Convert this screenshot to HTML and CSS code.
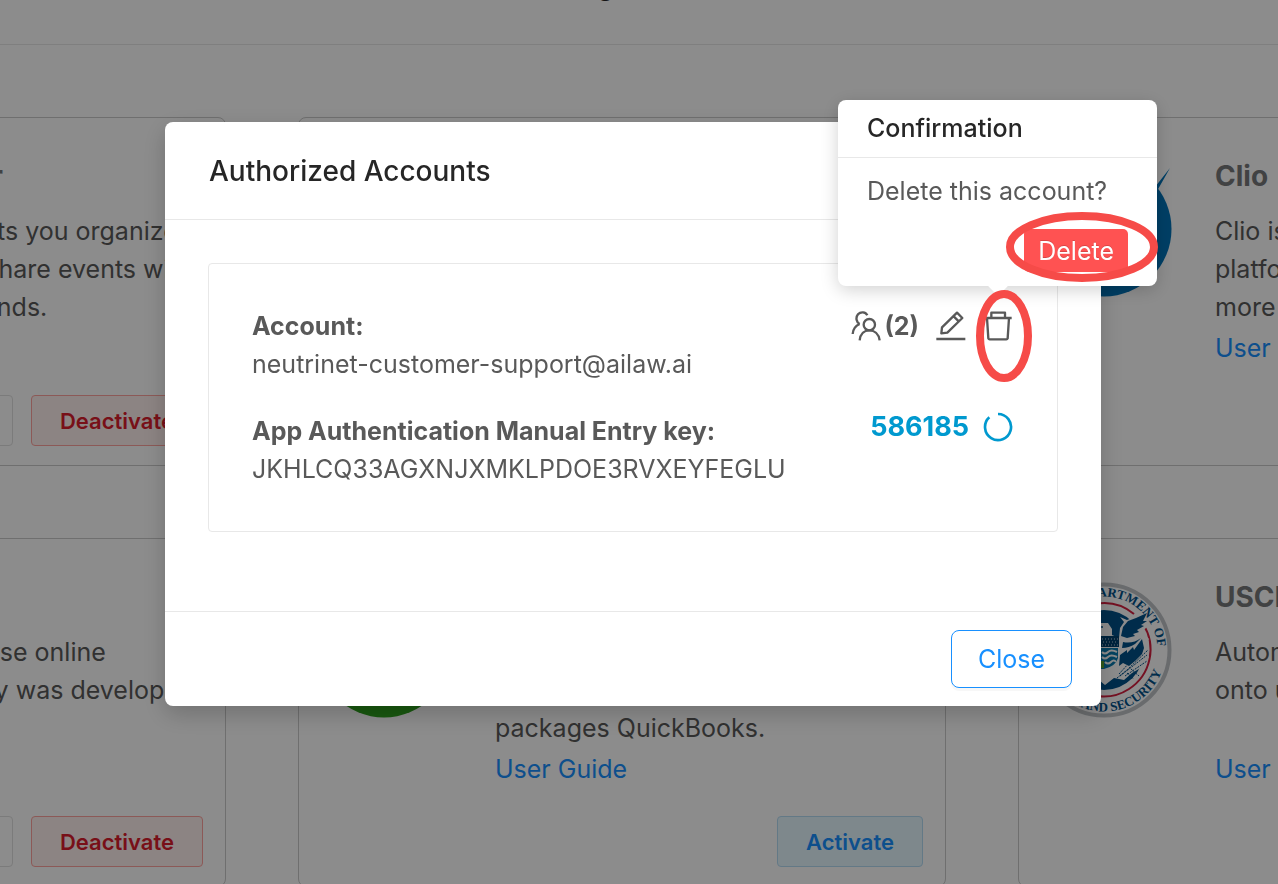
FILE: index.html
```html
<!DOCTYPE html>
<html lang="en">
<head>
<meta charset="utf-8">
<meta name="viewport" content="width=device-width, initial-scale=1">
<title>Authorized Accounts</title>
<link rel="stylesheet" href="styles.css">
</head>
<body>
<div class="page">
  <header class="page-header"><h1 class="page-title">Integrations</h1></header>
  <main class="cards">
    <article class="card">
      <div class="card-main">
        <div class="logo"></div>
        <div class="card-text">
          <h2 class="card-title">Google Calendar</h2>
          <p class="card-desc">Google calendar lets you organize<br>the schedule and share events with<br>coworkers and friends.</p>
          <a class="link" href="#">User Guide</a>
        </div>
      </div>
      <div class="card-actions">
        <button class="btn btn-plain" type="button">Settings</button>
        <button class="btn btn-deactivate" type="button">Deactivate</button>
      </div>
    </article>
    <article class="card">
      <div class="card-main">
        <div class="logo"></div>
        <div class="card-text">
          <h2 class="card-title">Outlook</h2>
          <p class="card-desc">Email and calendar.</p>
          <a class="link" href="#">User Guide</a>
        </div>
      </div>
      <div class="card-actions">
        <button class="btn btn-activate" type="button">Activate</button>
      </div>
    </article>
    <article class="card">
      <div class="card-main">
        <svg class="logo" viewBox="0 0 136 136" aria-hidden="true">
          <circle cx="68" cy="68" r="67.500" fill="#0073b8"/>
          <path d="M108 40L134 7L121 30L112 48Z" fill="#0073b8"/>
        </svg>
        <div class="card-text">
          <h2 class="card-title">Clio</h2>
          <p class="card-desc">Clio is a legal software<br>platform for law firms and<br>more</p>
          <a class="link" href="#">User Guide</a>
        </div>
      </div>
      <div class="card-actions">
        <button class="btn btn-activate" type="button">Activate</button>
      </div>
    </article>
    <article class="card">
      <div class="card-main">
        <div class="logo"></div>
        <div class="card-text">
          <h2 class="card-title">LawPay</h2>
          <p class="card-desc">LawPay is free to use online<br>solutions. Company was developed<br></p>
          <a class="link" href="#">User Guide</a>
        </div>
      </div>
      <div class="card-actions">
        <button class="btn btn-plain" type="button">Settings</button>
        <button class="btn btn-deactivate" type="button">Deactivate</button>
      </div>
    </article>
    <article class="card">
      <div class="card-main">
        <svg class="logo" viewBox="0 0 136 136" aria-hidden="true"><circle cx="68" cy="68" r="67.500" fill="#2ca01c"/></svg>
        <div class="card-text">
          <h2 class="card-title">QuickBooks</h2>
          <p class="card-desc">Intuit develops the<br>accounting software<br>packages QuickBooks.</p>
          <a class="link" href="#">User Guide</a>
        </div>
      </div>
      <div class="card-actions">
        <button class="btn btn-activate" type="button">Activate</button>
      </div>
    </article>
    <article class="card">
      <div class="card-main">
        <svg class="logo" viewBox="0 0 136 136" aria-hidden="true">
          <defs>
            <path id="seal-top" d="M14.500 68A53.500 53.500 0 0 1 68 14.500A53.500 53.500 0 0 1 121.500 68V80"/>
            <path id="seal-bottom" d="M6.500 68A61.500 61.500 0 0 0 129.500 68"/>
          </defs>
          <circle cx="68" cy="68" r="65.500" fill="#fff" stroke="#c0c4c7" stroke-width="4"/>
          <path d="M28 43A47 47 0 0 1 98 32M107 42A47 47 0 0 1 28 93" fill="none" stroke="#d51f3f" stroke-width="2"/>
          <circle cx="68" cy="68" r="40" fill="#005189"/>
          <path d="M83 56L84 46L88 40L84 35L91 38L99 35L112 31L108 41L114 43L106 49L113 57L109 64L113 75L108 84L96 91L88 98L78 96L69 103L58 94L58 43L63 41L72 41L76 47L76 53Z" fill="#fff"/>
          <path d="M85 54L87 45L92 39L100 36L111 31L107 39L111 39L105 43L108 44L101 48L103 50L97 52L99 54L91 56Z" fill="#005189"/>
          <path d="M84 73L91 68L91 71L97 65L98 68L106 57L108 66L106 72L99 79L93 84L87 81L83 84Z" fill="#005189"/>
          <path d="M87 60Q97 62 105 56L99 62Q93 66 86 66Z" fill="#005189"/>
          <path d="M58 54H83V65H58Z" fill="#00416f"/>
          <path d="M60 57H82M61 60H82M60 63H82" stroke="#b9cbd8" stroke-width="1" stroke-dasharray="1 2"/>
          <path d="M58 66H82V76Q80 84 68 87H58Z" fill="#087baf"/>
          <path d="M66 70q3 3 6 0t9 0M66 75q3 3 6 0t9 0M69 80q3 3 6 0t5 0" stroke="#fff" stroke-width="2" fill="none"/>
          <path d="M58 79H68V86H58Z" fill="#59a331"/>
          <circle cx="66" cy="45" r="1" fill="#005189"/>
          <path d="M81 96L91 88L112 68M84 94L111 73M83 92L104 69M89 94L111 79M91 91L98 97M95 87L103 94" stroke="#005189" stroke-width="1" stroke-dasharray="2 1" fill="none"/>
          <text class="seal-text"><textPath href="#seal-top" startOffset="53%" text-anchor="middle">U.S. DEPARTMENT OF</textPath></text>
          <text class="seal-text"><textPath href="#seal-bottom" startOffset="50%" text-anchor="middle">HOMELAND SECURITY</textPath></text>
        </svg>
        <div class="card-text">
          <h2 class="card-title">USCIS</h2>
          <p class="card-desc">Automatically file forms<br>onto uscis.gov</p>
          <a class="link" href="#">User Guide</a>
        </div>
      </div>
      <div class="card-actions">
        <button class="btn btn-activate" type="button">Activate</button>
      </div>
    </article>
  </main>
</div>

<div class="mask">
  <section class="modal" role="dialog" aria-labelledby="modal-title">
    <header class="modal-header"><h2 class="modal-title" id="modal-title">Authorized Accounts</h2></header>
    <div class="modal-body">
      <div class="account">
        <div class="row">
          <div class="field"><strong>Account:</strong><span>neutrinet-customer-support@ailaw.ai</span></div>
          <div class="tools">
            <button class="tool" type="button" aria-label="Users">
              <svg class="icon" viewBox="0 0 90 90" aria-hidden="true">
                <circle cx="55" cy="41" r="17"/>
                <path d="M26 88C28 68 40 58 55 58S83 68 86 88M49 13C44 2 29 1 21 10C13 20 16 33 26 39M26 39C14 44 6 55 5 69"/>
              </svg>
              <b>(2)</b>
            </button>
            <button class="tool" type="button" aria-label="Edit">
              <svg class="icon" viewBox="0 0 90 90" aria-hidden="true"><path d="M1 84H88M16 67L18 49L63 5L79 21L34 65ZM53 16L69 32"/></svg>
            </button>
            <div class="popover-anchor">
              <button class="tool" type="button" aria-label="Delete account">
                <svg class="icon" viewBox="0 0 90 90" aria-hidden="true"><path d="M3 21H86M25 20V5H66V20M12 21L16 82Q17 85 20 85H70Q73 85 74 82L78 21"/></svg>
              </button>
              <svg class="marker marker-tall" viewBox="0 0 56 92" aria-hidden="true"><ellipse cx="28" cy="46" rx="24" ry="42"/></svg>
              <div class="popover" role="dialog" aria-labelledby="popover-title">
                <h3 class="popover-title" id="popover-title">Confirmation</h3>
                <div class="popover-body">
                  <p class="popover-text">Delete this account?</p>
                  <button class="btn-delete" type="button">Delete</button>
                </div>
                <svg class="marker marker-wide" viewBox="0 0 152 70" aria-hidden="true"><ellipse cx="76" cy="35" rx="72" ry="31"/></svg>
              </div>
            </div>
          </div>
        </div>
        <div class="row">
          <div class="field"><strong>App Authentication Manual Entry key:</strong><span>JKHLCQ33AGXNJXMKLPDOE3RVXEYFEGLU</span></div>
          <div class="code">
            <b class="code-value">586185</b>
            <svg class="icon icon-timer" viewBox="0 0 90 90" aria-hidden="true"><path d="M45 6A39 39 0 1 1 19 16"/></svg>
          </div>
        </div>
      </div>
    </div>
    <footer class="modal-footer"><button class="btn-close" type="button">Close</button></footer>
  </section>
</div>
</body>
</html>
```
FILE: styles.css
```css
* { box-sizing: border-box; }
body {
  margin: 0;
  font: 400 25px/38px Inter, "Liberation Sans", sans-serif;
  color: #595959;
  background: #fff;
}
h1, h2, h3, p { margin: 0; }
button { font: inherit; color: inherit; cursor: pointer; }
a { text-decoration: none; }

.page { height: 100vh; overflow: hidden; }
.page-header { display: flex; justify-content: center; align-items: flex-start; height: 45px; padding-right: 24px; border-bottom: 1px solid #e8e8e8; }
.page-title { margin-top: -32px; font-size: 28px; line-height: 34px; font-weight: 600; color: #262626; }

.cards {
  display: grid;
  grid-template-columns: repeat(3, minmax(0, 1fr));
  gap: 72px;
  margin: 72px -388px 0 -422px;
}
.card { border: 1px solid #cbcbcb; border-radius: 8px; padding: 39px 22px 19px 17px; }
.card-main { display: flex; gap: 43px; }
.logo { flex: none; width: 136px; height: 136px; margin-top: 4px; }
.card-text { flex: 1; min-width: 0; white-space: nowrap; }
.card-title { margin-bottom: 17px; font-size: 28px; line-height: 38px; font-weight: 700; color: #77797b; }
.card-desc { min-height: 114px; margin-bottom: 3px; }
.link { display: block; color: #1890ff; }
.card-actions { display: flex; justify-content: flex-end; gap: 18px; margin-top: 28px; }
.btn { height: 51px; padding: 0 28px; border: 1px solid #e0e0e0; border-radius: 4px; background: #fff; font-size: 22px; font-weight: 600; line-height: 28px; }
.btn-deactivate { color: #db1d2c; background: #fff0ee; border-color: #ffa39e; }
.btn-activate { color: #1890ff; background: #e6f7ff; border-color: #b5dcf5; }
.seal-text { font: 700 13px "Liberation Serif", serif; fill: #005189; }

.mask { position: fixed; inset: 0; padding: 122px 177px 0 165px; background: rgba(0, 0, 0, .45); }
.modal { background: #fff; border-radius: 8px; box-shadow: 0 8px 24px rgba(0, 0, 0, .2); }
.modal-header { padding: 30px 44px 29px; border-bottom: 1px solid #e8e8e8; }
.modal-title { font-size: 28px; line-height: 38px; font-weight: 500; color: #262626; }
.modal-body { padding: 43px 43px 79px; }
.account { display: flex; flex-direction: column; gap: 29px; padding: 43px 44px 43px 43px; border: 1px solid #e8e8e8; border-radius: 4px; }
.row { display: flex; justify-content: space-between; }
.field { display: flex; flex-direction: column; }
.tools { display: flex; height: 38px; gap: 17px; }
.tool { display: flex; align-items: center; gap: 3px; height: 38px; padding: 0; border: 0; background: none; }
.icon { width: 30px; height: 30px; fill: none; stroke: #595959; stroke-width: 7; stroke-linejoin: round; }
.code { display: flex; gap: 14px; height: 30px; align-items: center; color: #0099cf; }
.code-value { font-size: 27px; }
.icon-timer { stroke: #0099cf; stroke-width: 8; }
.modal-footer { display: flex; justify-content: flex-end; padding: 18px 29px; border-top: 1px solid #e8e8e8; }
.btn-close { height: 58px; padding: 0 26px; border: 1px solid #1890ff; border-radius: 8px; background: #fff; color: #1890ff; box-shadow: 0 3px 0 rgba(0, 0, 0, .03); }

.popover-anchor { position: relative; }
.popover { position: absolute; right: -144px; bottom: 59px; width: 319px; background: #fff; border-radius: 8px; box-shadow: 0 4px 18px rgba(0, 0, 0, .18); }
.popover::after { content: ""; position: absolute; left: 153px; bottom: -7px; width: 14px; height: 14px; background: #fff; transform: rotate(45deg); }
.popover-title { padding: 9px 29px 10px; border-bottom: 1px solid #e8e8e8; font-size: 25px; line-height: 38px; font-weight: 500; color: #262626; }
.popover-body { display: flex; flex-direction: column; padding: 14px 29px; }
.popover-text { margin-bottom: 19px; white-space: nowrap; }
.btn-delete { align-self: flex-end; height: 43px; padding: 0 14px; border: 0; border-radius: 5px; background: #ff5252; color: #fff; text-shadow: 0 -1px 0 rgba(0, 0, 0, .15); }
.marker { position: absolute; z-index: 2; pointer-events: none; fill: none; stroke: #f64b48; stroke-width: 8; }
.marker-wide { right: -1px; bottom: 4px; width: 152px; height: 70px; }
.marker-tall { left: -7px; top: -17px; width: 56px; height: 92px; }
```
